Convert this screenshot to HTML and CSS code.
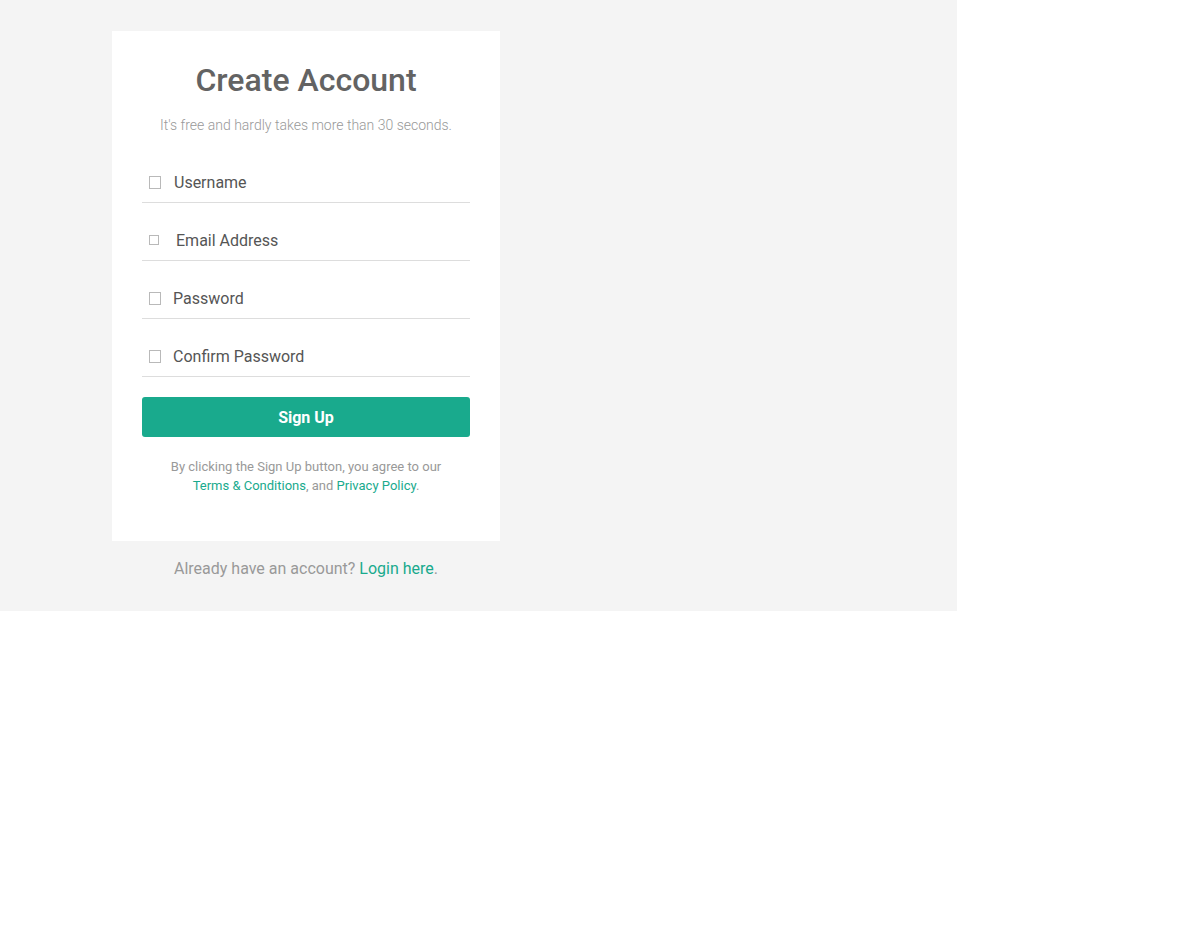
FILE: index.html
```html
<!DOCTYPE html>
<html lang="en">
<head>
<meta charset="utf-8">
<title>Create Account</title>
<link rel="stylesheet" href="styles.css">
</head>
<body>
<div class="page">
  <div class="signup">
    <form class="card">
      <h2 class="title">Create Account</h2>
      <p class="subtitle">It's free and hardly takes more than 30 seconds.</p>
      <div class="field field-user">
        <span class="icon icon-lg"></span>
        <input type="text" placeholder="Username">
      </div>
      <div class="field field-email">
        <span class="icon icon-sm"></span>
        <input type="email" placeholder="Email Address">
      </div>
      <div class="field field-pass">
        <span class="icon icon-lg"></span>
        <input type="password" placeholder="Password">
      </div>
      <div class="field field-pass">
        <span class="icon icon-lg"></span>
        <input type="password" placeholder="Confirm Password">
      </div>
      <button type="button" class="btn">Sign Up</button>
      <p class="terms">By clicking the Sign Up button, you agree to our<br><a href="#">Terms &amp; Conditions</a>, and <a href="#">Privacy Policy</a>.</p>
    </form>
    <p class="login">Already have an account? <a href="#">Login here</a>.</p>
  </div>
</div>
</body>
</html>
```
FILE: styles.css
```css
html, body {
  margin: 0;
  padding: 0;
  background: #ffffff;
}
body {
  font-family: Roboto, "Liberation Sans", Arial, sans-serif;
}
.page {
  width: 957px;
  background: #f4f4f4;
  padding: 31px 0 31px 112px;
  box-sizing: border-box;
}
.signup {
  width: 388px;
}
.card {
  display: block;
  background: #ffffff;
  padding: 30px 30px 46px;
  margin: 0;
}
.title {
  margin: 0;
  font-size: 32px;
  line-height: 38px;
  font-weight: 500;
  color: #636363;
  text-align: center;
}
.subtitle {
  margin: 16px 0 27px;
  font-size: 14px;
  line-height: 20px;
  font-weight: 300;
  color: #999999;
  text-align: center;
}
.field {
  display: flex;
  align-items: center;
  height: 40px;
  border-bottom: 1px solid #dddddd;
  margin-bottom: 17px;
  padding-left: 7px;
}
.field:last-of-type {
  margin-bottom: 20px;
}
.icon {
  flex: none;
  box-sizing: border-box;
  border: 1px solid #b9b9b9;
}
.icon-lg {
  width: 12px;
  height: 13px;
  margin-top: 1px;
}
.icon-sm {
  width: 10px;
  height: 10px;
}
.field input {
  flex: 1;
  min-width: 0;
  border: 0;
  padding: 0;
  outline: none;
  background: transparent;
  font-family: Roboto, "Liberation Sans", Arial, sans-serif;
  font-size: 16px;
  color: #555555;
}
.field input::placeholder {
  color: #555555;
  opacity: 1;
}
.field-user input {
  margin-left: 13px;
}
.field-email input {
  margin-left: 17px;
}
.field-pass input {
  margin-left: 12px;
}
.btn {
  display: block;
  width: 100%;
  height: 40px;
  border: 0;
  border-radius: 3px;
  background: #19aa8d;
  color: #ffffff;
  font-family: Roboto, "Liberation Sans", Arial, sans-serif;
  font-size: 16px;
  font-weight: 700;
  cursor: pointer;
}
.terms {
  margin: 20px 0 0;
  font-size: 13px;
  line-height: 19px;
  color: #999999;
  text-align: center;
}
a {
  color: #19aa8d;
  text-decoration: none;
}
.login {
  margin: 17px 0 0;
  font-size: 16px;
  line-height: 22px;
  color: #999999;
  text-align: center;
}
```
